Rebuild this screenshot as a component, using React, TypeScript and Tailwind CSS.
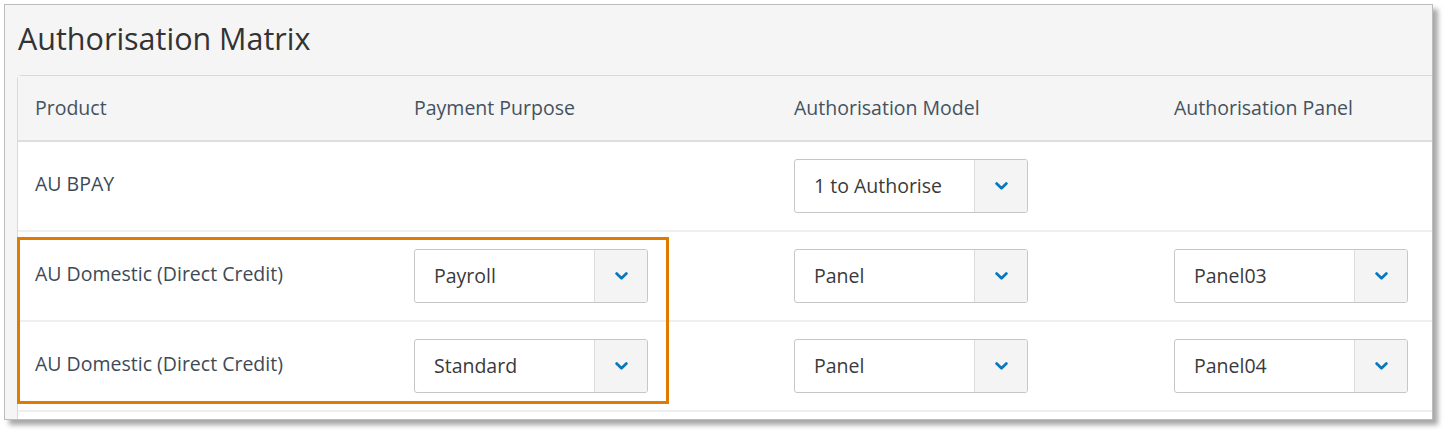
const font = { fontFamily: '"Open Sans", "Noto Sans", sans-serif' };

function Chevron() {
  return (
    <svg width="13" height="8" viewBox="0 0 13 8" fill="none">
      <polyline points="1.6,1.6 6.5,6.2 11.4,1.6" stroke="#0a78bb" strokeWidth="2.8" strokeLinecap="round" strokeLinejoin="round" />
    </svg>
  );
}

function Select({ value }: { value: string }) {
  return (
    <div className="flex h-[54px] w-[234px] items-stretch overflow-hidden rounded-[3px] border border-[#c6c6c6] bg-white">
      <div className="flex flex-1 items-center pl-[19px] text-[19.5px] text-[#3a3a3a]">{value}</div>
      <div className="flex w-[53px] items-center justify-center border-l border-[#dcdcdc] bg-[#f4f4f4]">
        <Chevron />
      </div>
    </div>
  );
}

type Row = { product: string; purpose?: string; model?: string; panel?: string };

const rows: Row[] = [
  { product: "AU BPAY", model: "1 to Authorise" },
  { product: "AU Domestic (Direct Credit)", purpose: "Payroll", model: "Panel", panel: "Panel03" },
  { product: "AU Domestic (Direct Credit)", purpose: "Standard", model: "Panel", panel: "Panel04" },
  { product: "" },
];

export default function App() {
  return (
    <div className="min-h-screen bg-white pl-[4px] pt-[4px]" style={font}>
      <div className="relative h-[416px] w-[1429px] overflow-hidden border border-[#bcbcbc] bg-[#f5f5f5] shadow-[5px_5px_5px_rgba(0,0,0,0.35)]">
        <h1 className="h-[70px] pl-[13px] pt-[13px] text-[30.5px] leading-[40px] text-[#333]">Authorisation Matrix</h1>

        <div className="ml-[12px] w-[1440px] rounded-tl-[4px] border border-[#d9d9d9] bg-white">
          <div className="grid h-[66px] grid-cols-[379px_380px_380px_1fr] items-center border-b-2 border-[#dedede] bg-[#f5f5f5] text-[19.5px] text-[#44525f]">
            <div className="pl-[17px]">Product</div>
            <div className="pl-[17px]">Payment Purpose</div>
            <div className="pl-[17px]">Authorisation Model</div>
            <div className="pl-[17px]">Authorisation Panel</div>
          </div>

          {rows.map((r, i) => (
            <div
              key={i}
              className="grid h-[90px] grid-cols-[379px_380px_380px_1fr] items-center border-b-2 border-[#efefef] text-[19.5px] text-[#3d4a57]"
            >
              <div className="pl-[17px] pb-[4px]">{r.product}</div>
              <div className="pl-[17px]">{r.purpose && <Select value={r.purpose} />}</div>
              <div className="pl-[17px]">{r.model && <Select value={r.model} />}</div>
              <div className="pl-[17px]">{r.panel && <Select value={r.panel} />}</div>
            </div>
          ))}
        </div>

        {/* highlight box */}
        <div className="pointer-events-none absolute left-[12px] top-[232px] h-[167px] w-[652px] border-[3px] border-[#e07b00]" />
      </div>
    </div>
  );
}
